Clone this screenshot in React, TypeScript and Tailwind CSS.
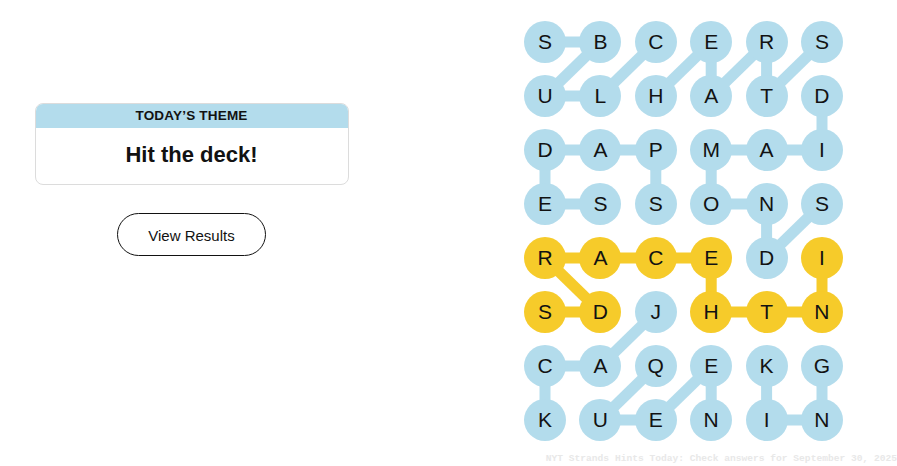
import React from "react";

const LETTERS = [
  "SBCERS",
  "ULHATD",
  "DAPMAI",
  "ESSONS",
  "RACEDI",
  "SDJHTN",
  "CAQEKG",
  "KUENIN",
];

const YELLOW_CELLS = new Set([
  "4,0", "4,1", "4,2", "4,3", "4,5",
  "5,0", "5,1", "5,3", "5,4", "5,5",
]);

type Edge = [number, number, number, number];

const BLUE_EDGES: Edge[] = [
  [0, 0, 0, 1],
  [0, 1, 1, 0],
  [1, 0, 1, 1],
  [1, 1, 0, 2],
  [0, 3, 1, 2],
  [0, 3, 1, 3],
  [0, 4, 1, 3],
  [0, 4, 1, 4],
  [0, 5, 1, 4],
  [1, 5, 2, 5],
  [2, 0, 2, 1],
  [2, 1, 2, 2],
  [2, 0, 3, 0],
  [3, 0, 3, 1],
  [2, 2, 3, 2],
  [2, 3, 2, 4],
  [2, 4, 2, 5],
  [2, 3, 3, 3],
  [3, 3, 3, 4],
  [3, 4, 4, 4],
  [3, 5, 4, 4],
  [5, 2, 6, 1],
  [6, 0, 6, 1],
  [6, 0, 7, 0],
  [6, 2, 7, 1],
  [7, 1, 7, 2],
  [7, 2, 6, 3],
  [6, 3, 7, 3],
  [6, 4, 7, 4],
  [7, 4, 7, 5],
  [6, 5, 7, 5],
];

const YELLOW_EDGES: Edge[] = [
  [4, 0, 4, 1],
  [4, 1, 4, 2],
  [4, 2, 4, 3],
  [4, 0, 5, 1],
  [5, 0, 5, 1],
  [4, 3, 5, 3],
  [5, 3, 5, 4],
  [5, 4, 5, 5],
  [4, 5, 5, 5],
];

const BLUE = "#b3dcec";
const YEL = "#f6cb2a";
const CELL = 42;
const DX = 55.4;
const DY = 54;

const cx = (c: number) => CELL / 2 + c * DX;
const cy = (r: number) => CELL / 2 + r * DY;

export default function App() {
  const W = CELL + 5 * DX;
  const H = CELL + 7 * DY;
  return (
    <div
      className="relative w-[897px] h-[466px] bg-white overflow-hidden flex text-[#121212]"
      style={{ fontFamily: '"Liberation Sans", Arial, sans-serif' }}
    >
      <div className="w-[383px] pt-[103px] flex flex-col items-center">
        <div className="w-[314px] rounded-[8px] border border-[#dcdcdc] overflow-hidden">
          <div className="h-[24px] bg-[#b3dcec] flex items-center justify-center text-[13.5px] font-bold tracking-[0.2px] text-[#121212]">
            TODAY’S THEME
          </div>
          <div className="h-[56px] flex items-center justify-center text-[22px] font-bold pb-[3px]">
            Hit the deck!
          </div>
        </div>
        <button className="mt-[28px] w-[149px] h-[43px] rounded-full border border-[#121212] text-[15px] text-[#121212] flex items-center justify-center pt-[3px] bg-white">
          View Results
        </button>
      </div>

      <div className="pl-[141px] pt-[21px]">
        <div className="relative" style={{ width: W, height: H }}>
          <svg
            className="absolute inset-0"
            width={W}
            height={H}
            viewBox={`0 0 ${W} ${H}`}
          >
            {BLUE_EDGES.map(([r1, c1, r2, c2], i) => (
              <line
                key={"b" + i}
                x1={cx(c1)}
                y1={cy(r1)}
                x2={cx(c2)}
                y2={cy(r2)}
                stroke={BLUE}
                strokeWidth={11}
              />
            ))}
            {YELLOW_EDGES.map(([r1, c1, r2, c2], i) => (
              <line
                key={"y" + i}
                x1={cx(c1)}
                y1={cy(r1)}
                x2={cx(c2)}
                y2={cy(r2)}
                stroke={YEL}
                strokeWidth={11}
              />
            ))}
          </svg>
          <div className="relative grid grid-cols-[repeat(6,42px)] gap-x-[13.4px] gap-y-[12px]">
            {LETTERS.flatMap((row, r) =>
              row.split("").map((ch, c) => {
                const y = YELLOW_CELLS.has(`${r},${c}`);
                return (
                  <div
                    key={`${r}-${c}`}
                    className={
                      "w-[42px] h-[42px] rounded-full flex items-center justify-center text-[21px] text-[#121212] " +
                      (y ? "bg-[#f6cb2a]" : "bg-[#b3dcec]")
                    }
                  >
                    {ch}
                  </div>
                );
              })
            )}
          </div>
        </div>
      </div>

      <div
        className="absolute right-[0px] bottom-[0px] text-[9.6px] leading-[14px] font-bold text-[#e8e8e8] whitespace-nowrap"
        style={{ fontFamily: '"Liberation Mono", "Courier New", monospace' }}
      >
        NYT Strands Hints Today: Check answers for September 30, 2025
      </div>
    </div>
  );
}
